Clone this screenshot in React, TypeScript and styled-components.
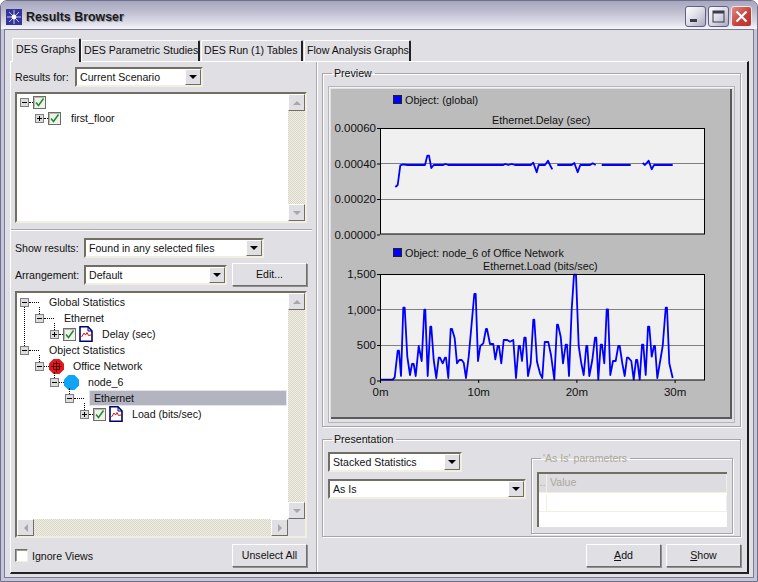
import React from 'react';
import styled, { createGlobalStyle } from 'styled-components';

const GlobalStyle = createGlobalStyle`
	html, body {
		margin: 0;
		padding: 0;
		background: #fff;
	}
	* {
		box-sizing: border-box;
	}
`;

const FONT = `'Liberation Sans', Arial, sans-serif`;

const Window = styled.div`
	width: 758px;
	height: 582px;
	display: flex;
	flex-direction: column;
	padding: 0 3px 3px;
	background: #c6c6d8;
	border: 1px solid #6e6e8c;
	border-radius: 7px 7px 0 0;
	font-family: ${FONT};
	font-size: 10.6px;
	color: #111;
	overflow: hidden;
`;

const TitleBar = styled.div`
	height: 28px;
	margin: 0 -3px;
	padding: 3px 5px 0 5px;
	display: flex;
	align-items: center;
	gap: 2px;
	background: linear-gradient(#a6a6be 0%, #b8b8cc 30%, #dadae6 75%, #f6f6fa 100%);
`;

const TitleText = styled.div`
	flex: 1;
	font-size: 12.4px;
	font-weight: bold;
	color: #1a1a1a;
	text-shadow: 1px 1px 0 #9a9aa8;
	margin-left: 2px;
`;

const CaptionButton = styled.div<{ $close?: boolean }>`
	width: 21px;
	height: 21px;
	flex: none;
	border-radius: 3px;
	display: flex;
	align-items: center;
	justify-content: center;
	border: 1px solid ${p => (p.$close ? '#f0e8e8' : '#5f5f82')};
	background: ${p =>
		p.$close
			? 'linear-gradient(135deg, #e08a80, #c43e3a 60%, #b8322f)'
			: 'linear-gradient(135deg, #fff, #dcdce6 50%, #a9a9c0)'};
`;

const Client = styled.div`
	flex: 1;
	min-height: 0;
	display: flex;
	flex-direction: column;
	padding: 8px 4px 3px 5px;
	background: #e0dfe3;
	border: 1px solid #7a7a98;
`;

const TabStrip = styled.div`
	height: 23px;
	display: flex;
	align-items: flex-end;
	padding-left: 2px;
	position: relative;
	z-index: 1;
`;

const Tab = styled.div<{ $active?: boolean; $w: number }>`
	width: ${p => p.$w}px;
	height: ${p => (p.$active ? 24 : 21)}px;
	margin-bottom: ${p => (p.$active ? -1 : 0)}px;
	margin-right: ${p => (p.$active ? 0 : 1)}px;
	padding: ${p => (p.$active ? '4px 0 0 3px' : '3px 0 0 2px')};
	background: #e0dfe3;
	border-top: 1px solid #fff;
	border-left: 1px solid #fff;
	border-right: 2px solid #222;
	border-radius: 2px 2px 0 0;
	white-space: nowrap;
	overflow: hidden;
`;

const Page = styled.div`
	flex: 1;
	min-height: 0;
	display: flex;
	border-top: 1px solid #fff;
	border-left: 1px solid #fff;
	border-right: 2px solid #1a1a1a;
	border-bottom: 2px solid #222;
`;

const LeftPanel = styled.div`
	width: 301px;
	flex: none;
	padding: 5px 5px 0 4px;
	display: flex;
	flex-direction: column;
`;

const PanelRule = styled.div`
	height: 2px;
	margin: 6px -5px 7px -4px;
	background: #a9a8ad;
	border-bottom: 1px solid #fff;
`;

const Row = styled.div<{ $mt?: number }>`
	display: flex;
	align-items: center;
	margin-top: ${p => p.$mt ?? 0}px;
`;

const FieldLabel = styled.div<{ $w: number }>`
	width: ${p => p.$w}px;
	flex: none;
`;

const Combo = styled.div<{ $w: number }>`
	width: ${p => p.$w}px;
	height: 20px;
	flex: none;
	display: flex;
	align-items: center;
	justify-content: space-between;
	padding-left: 3px;
	background: #fff;
	border: 2px solid;
	border-color: #716f64 #f1efe2 #f1efe2 #716f64;
`;

const ComboArrow = styled.div`
	width: 16px;
	height: 16px;
	display: flex;
	align-items: center;
	justify-content: center;
	background: #e0dfe3;
	border: 1px solid;
	border-color: #fff #716f64 #716f64 #fff;
	&::after {
		content: '';
		border: 4px solid transparent;
		border-top: 4px solid #000;
		border-bottom: 0;
	}
`;

const PushButton = styled.button<{ $ml?: number }>`
	width: 75px;
	height: 23px;
	flex: none;
	margin-left: ${p => p.$ml ?? 0}px;
	padding: 0 0 2px;
	font: inherit;
	color: inherit;
	background: #e0dfe3;
	border: 1px solid;
	border-color: #fff #716f64 #716f64 #fff;
	box-shadow: 1px 1px 0 #8f8e92;
`;

const Underlined = styled.span`
	text-decoration: underline;
`;

const TreeBox = styled.div<{ $h: number; $horizontal?: boolean }>`
	height: ${p => p.$h}px;
	margin-top: 5px;
	display: grid;
	grid-template-columns: 1fr 17px;
	grid-template-rows: ${p => (p.$horizontal ? '1fr 17px' : '1fr')};
	background: #fff;
	border: 2px solid;
	border-color: #716f64 #f1efe2 #f1efe2 #716f64;
`;

const TreeList = styled.div<{ $pt?: number }>`
	padding-top: ${p => p.$pt ?? 0}px;
	min-width: 0;
`;

const TreeRow = styled.div<{ $depth: number }>`
	height: 16px;
	display: flex;
	align-items: center;
	padding-left: ${p => 3 + p.$depth * 15}px;
`;

const Expander = styled.div<{ $up?: number; $stub?: number }>`
	position: relative;
	width: 9px;
	height: 9px;
	flex: none;
	&::before {
		content: '';
		display: ${p => (p.$up ? 'block' : 'none')};
		position: absolute;
		left: 4px;
		bottom: 100%;
		height: ${p => p.$up}px;
		border-left: 1px dotted #000;
	}
	&::after {
		content: '';
		display: ${p => (p.$stub ? 'block' : 'none')};
		position: absolute;
		left: 100%;
		top: 4px;
		width: ${p => p.$stub}px;
		border-top: 1px dotted #000;
	}
`;

const TreeLabel = styled.div<{ $ml: number }>`
	margin-left: ${p => p.$ml}px;
	white-space: nowrap;
`;

const SelectedLabel = styled.div`
	flex: 1;
	height: 16px;
	margin-left: 15px;
	margin-right: 1px;
	padding-left: 4px;
	line-height: 14px;
	background: #b2b4bf;
	border: 1px solid #e4e4ea;
`;

const IconSlot = styled.div<{ $ml: number }>`
	margin-left: ${p => p.$ml}px;
	display: flex;
	flex: none;
`;

const VScroll = styled.div`
	display: flex;
	flex-direction: column;
	justify-content: space-between;
	background: repeating-conic-gradient(#f1efe2 0 25%, #d8d6cb 0 50%) 0 0 / 2px 2px;
`;

const HScroll = styled.div`
	display: flex;
	justify-content: space-between;
	background: repeating-conic-gradient(#f1efe2 0 25%, #d8d6cb 0 50%) 0 0 / 2px 2px;
`;

const ScrollCorner = styled.div`
	background: #e0dfe3;
`;

const ScrollButton = styled.div<{ $dir: 'up' | 'down' | 'left' | 'right' }>`
	width: 17px;
	height: 17px;
	flex: none;
	display: flex;
	align-items: center;
	justify-content: center;
	background: #e0dfe3;
	border: 1px solid;
	border-color: #fff #716f64 #716f64 #fff;
	&::after {
		content: '';
		border: 4px solid transparent;
		${p => p.$dir === 'up' && 'border-bottom: 4px solid #a7a6aa; border-top: 0;'}
		${p => p.$dir === 'down' && 'border-top: 4px solid #a7a6aa; border-bottom: 0;'}
		${p => p.$dir === 'left' && 'border-right: 4px solid #a7a6aa; border-left: 0;'}
		${p => p.$dir === 'right' && 'border-left: 4px solid #a7a6aa; border-right: 0;'}
	}
`;

const BottomRow = styled.div`
	margin-top: 6px;
	display: flex;
	align-items: center;
	justify-content: space-between;
`;

const CheckRow = styled.label`
	display: flex;
	align-items: center;
	gap: 4px;
`;

const CheckBox = styled.span`
	width: 13px;
	height: 13px;
	background: #fff;
	border: 1px solid;
	border-color: #716f64 #f1efe2 #f1efe2 #716f64;
	box-shadow: inset 1px 1px 0 #a09f98;
`;

const RightPanel = styled.div`
	flex: 1;
	min-width: 0;
	padding: 4px 6px 0 5px;
	display: flex;
	flex-direction: column;
	border-left: 1px solid #a9a8ad;
	margin-left: 4px;
	box-shadow: inset 1px 0 0 #fff;
`;

const GroupBox = styled.fieldset<{ $h: number; $mt?: number; $disabled?: boolean }>`
	height: ${p => p.$h}px;
	margin: ${p => p.$mt ?? 0}px 0 0;
	padding: 0 5px;
	min-width: 0;
	border: 1px solid #a5a4a9;
	box-shadow: inset 1px 1px 0 #fff, 1px 1px 0 #fff;
	color: ${p => (p.$disabled ? '#aca899' : 'inherit')};
`;

const GroupTitle = styled.legend`
	margin-left: 4px;
	padding: 0 3px 0 2px;
	line-height: 14px;
`;

const PreviewFrame = styled.div`
	height: 337px;
	margin-top: 6px;
	padding: 2px 2px 3px 2px;
	border: 1px solid #b6b5ba;
	box-shadow: inset 1px 1px 0 #f2f2f4;
`;

const PreviewPlot = styled.div`
	height: 100%;
	background: #bcbcbc;
	border-right: 2px solid #5a5a5a;
	border-bottom: 2px solid #5a5a5a;
`;

const ChartSvg = styled.svg`
	display: block;
	text {
		font-family: ${FONT};
		font-size: 10.8px;
		fill: #111;
	}
	text.axis {
		font-size: 11.5px;
	}
`;

const PresentationBody = styled.div`
	display: flex;
	margin-top: 6px;
`;

const PresentationLeft = styled.div`
	width: 198px;
	flex: none;
	display: flex;
	flex-direction: column;
	gap: 7px;
`;

const ParamsColumn = styled.div`
	flex: 1;
	margin: -1px 2px 0 5px;
`;

const ParamGrid = styled.div`
	height: 55px;
	margin-top: 7px;
	background: #fff;
	border-top: 2px solid #716f64;
	border-left: 2px solid #716f64;
`;

const GridRow = styled.div<{ $header?: boolean }>`
	height: ${p => (p.$header ? 19 : 17)}px;
	margin-top: ${p => (p.$header ? 0 : 2)}px;
	display: flex;
	line-height: 16px;
	background: ${p => (p.$header ? '#dddce0' : '#fff')};
	border-bottom: 1px solid #f1efe2;
	border-right: 1px solid #f1efe2;
`;

const GridGutter = styled.div`
	width: 8px;
	text-align: center;
	border-right: 1px solid #f1efe2;
`;

const GridCell = styled.div`
	flex: 1;
	padding-left: 3px;
`;

const ActionRow = styled.div`
	margin-top: 7px;
	display: flex;
	justify-content: flex-end;
	gap: 5px;
`;

const delayPoints = [
	[[226, 381], [233, 375], [241, 316], [250, 313], [262, 315], [315, 315], [322, 287], [327, 287], [334, 324], [341, 315], [370, 315], [376, 312], [385, 315], [550, 315], [556, 312], [565, 315], [575, 312], [585, 315], [632, 315], [640, 308], [650, 337], [656, 315], [675, 315], [684, 302], [690, 315], [697, 328]],
	[[712, 315], [755, 315], [763, 309], [773, 337], [781, 315], [810, 315], [818, 310], [827, 315]],
	[[845, 315], [932, 315]],
	[[968, 309], [975, 315], [986, 302], [995, 328], [1002, 315], [1058, 315]],
];

const loadPoints = [
	[[181, 419], [218, 419], [224, 412], [233, 332], [237, 332], [243, 408], [250, 203], [254, 203], [262, 350], [270, 405], [276, 372], [281, 372], [287, 408], [296, 318], [305, 363], [313, 209], [316, 209], [323, 408], [331, 260], [334, 260], [341, 360], [349, 414], [356, 353], [360, 353], [368, 370], [375, 353], [378, 353], [385, 414], [392, 267], [396, 267], [404, 295], [411, 370], [418, 360], [425, 360], [431, 368], [438, 414], [446, 350], [463, 162], [467, 162], [474, 363], [481, 318], [490, 310], [498, 267], [501, 267], [510, 312], [520, 312], [526, 358], [533, 318], [537, 318], [544, 370], [551, 300], [562, 300], [570, 305], [580, 300], [588, 414], [596, 318], [600, 318], [606, 363], [613, 293], [617, 293], [624, 408], [632, 370], [640, 239], [643, 239], [651, 365], [660, 400], [667, 414], [674, 306], [685, 306], [693, 345], [703, 419], [711, 254], [714, 254], [722, 290], [729, 370], [737, 314], [741, 314], [747, 408], [755, 208], [762, 104], [768, 104], [776, 318], [784, 370], [791, 405], [799, 318], [802, 318], [808, 408], [817, 360], [825, 293], [829, 293], [835, 419], [842, 314], [846, 314], [853, 370], [860, 208], [864, 208], [871, 405], [879, 363], [887, 363], [895, 318], [899, 318], [907, 370], [914, 408], [921, 353], [925, 353], [934, 363], [941, 419], [948, 360], [952, 360], [959, 419], [966, 314], [970, 314], [977, 405], [984, 260], [988, 260], [995, 350], [1002, 318], [1005, 318], [1012, 414], [1028, 318], [1037, 203], [1041, 203], [1048, 370], [1058, 414]],
];

// points were read off the picture at 3x, so bring them back down to chart pixels
const toLine = (pts: number[][], yOffset: number) =>
	pts.map(([x, y]) => `${(x / 3 - 11).toFixed(1)},${(y / 3 + yOffset).toFixed(1)}`).join(' ');

interface ChartProps {
	height: number;
	legend: string;
	legendY: number;
	title: string;
	titleX: number;
	plotTop: number;
	yLabels: string[];
	lines: number[][][];
	yOffset: number;
	xLabels?: boolean;
}

const Chart = ({ height, legend, legendY, title, titleX, plotTop, yLabels, lines, yOffset, xLabels }: ChartProps) => (
	<ChartSvg width={400} height={height} viewBox={`0 0 400 ${height}`}>
		<rect x={62.5} y={legendY - 4.5} width={8} height={8} fill="#0000ff" stroke="#222" />
		<text x={74} y={legendY + 4}>{legend}</text>
		<text x={titleX} y={plotTop - 4}>{title}</text>
		<rect x={49.5} y={plotTop + 0.5} width={324} height={105.5} fill="#f0f0f0" />
		{[35.5, 71.5].map(d => (
			<line key={d} x1={50} x2={373} y1={plotTop + d} y2={plotTop + d} stroke="#808080" />
		))}
		{yLabels.map((label, i) => (
			<g key={label}>
				<text className="axis" x={45} y={plotTop + 4 + i * 35.5} textAnchor="end">{label}</text>
				<line x1={46} x2={49} y1={plotTop + 0.5 + i * 35.5} y2={plotTop + 0.5 + i * 35.5} stroke="#000" />
			</g>
		))}
		{lines.map((pts, i) => (
			<polyline key={i} points={toLine(pts, yOffset)} fill="none" stroke="#0000ff" strokeWidth={1.8} strokeLinejoin="round" />
		))}
		<rect x={49.5} y={plotTop + 0.5} width={324} height={105.5} fill="none" stroke="#000" />
		{xLabels &&
			['0m', '10m', '20m', '30m'].map((label, i) => (
				<g key={label}>
					<line x1={49.5 + i * 98.2} x2={49.5 + i * 98.2} y1={plotTop + 106} y2={plotTop + 109} stroke="#000" />
					<text className="axis" x={49.5 + i * 98.2} y={plotTop + 122} textAnchor="middle">{label}</text>
				</g>
			))}
	</ChartSvg>
);

const ExpanderBox = ({ open }: { open?: boolean }) => (
	<svg width="9" height="9" viewBox="0 0 9 9" style={{ display: 'block' }}>
		<rect x="0.5" y="0.5" width="8" height="8" fill="#dcdcdc" stroke="#808080" />
		<line x1="2" x2="7" y1="4.5" y2="4.5" stroke="#000" />
		{!open && <line x1="4.5" x2="4.5" y1="2" y2="7" stroke="#000" />}
	</svg>
);

const CheckIcon = () => (
	<svg width="13" height="13" viewBox="0 0 13 13" style={{ display: 'block' }}>
		<rect x="0.5" y="0.5" width="12" height="12" fill="#f0f0ec" stroke="#6d6d66" />
		<path d="M1.5 1.5h10M1.5 1.5v10" stroke="#b9b9b4" fill="none" />
		<path d="M3 6.5l2.5 3L10.5 2.5" stroke="#1f8a2d" strokeWidth="1.5" fill="none" />
	</svg>
);

const DocIcon = () => (
	<svg width="14" height="16" viewBox="0 0 14 16" style={{ display: 'block' }}>
		<path d="M1 0.8H9L13 5V15.2H1Z" fill="#fff" stroke="#00006e" strokeWidth="1.6" />
		<path d="M9 1V5H13" fill="none" stroke="#00006e" />
		<path d="M2.5 11L5 7L6.5 9L8 6.5L9.5 9.5L12 9" fill="none" stroke="#e01010" />
	</svg>
);

const NetworkIcon = () => (
	<svg width="15" height="15" viewBox="0 0 15 15" style={{ display: 'block' }}>
		<path d="M4.5 0H10.5L15 4.5V10.5L10.5 15H4.5L0 10.5V4.5Z" fill="#e01a1a" />
		<path d="M7.5 2V13M2 7.5H13M4.5 4.5H10.5V10.5H4.5Z" fill="none" stroke="#5a0505" />
	</svg>
);

const NodeIcon = () => (
	<svg width="15" height="15" viewBox="0 0 15 15" style={{ display: 'block' }}>
		<path d="M4.5 0H10.5L15 4.5V10.5L10.5 15H4.5L0 10.5V4.5Z" fill="#10a4f4" />
	</svg>
);

const AppIcon = () => (
	<svg width="16" height="16" viewBox="0 0 16 16" style={{ display: 'block', flex: 'none' }}>
		<rect width="16" height="16" fill="#34349c" />
		<path d="M8 1V15M1 8H15M3 3L13 13M13 3L3 13" stroke="#c8c8f4" strokeWidth="1" />
		<circle cx="8" cy="8" r="2.4" fill="#fff" />
	</svg>
);

export default function App() {
	return (
		<>
			<GlobalStyle />
			<Window>
				<TitleBar>
					<AppIcon />
					<TitleText>Results Browser</TitleText>
					<CaptionButton>
						<svg width="13" height="13" viewBox="0 0 13 13">
							<rect x="1" y="9" width="7" height="3" fill="#3a3a50" />
						</svg>
					</CaptionButton>
					<CaptionButton>
						<svg width="13" height="13" viewBox="0 0 13 13">
							<rect x="1" y="1" width="11" height="11" fill="none" stroke="#3a3a50" />
							<rect x="1" y="1" width="11" height="2.5" fill="#3a3a50" />
						</svg>
					</CaptionButton>
					<CaptionButton $close>
						<svg width="13" height="13" viewBox="0 0 13 13">
							<path d="M1.5 1.5L11.5 11.5M11.5 1.5L1.5 11.5" stroke="#fff" strokeWidth="2.2" />
						</svg>
					</CaptionButton>
				</TitleBar>
				<Client>
					<TabStrip>
						<Tab $active $w={69}>DES Graphs</Tab>
						<Tab $w={119}>DES Parametric Studies</Tab>
						<Tab $w={102}>DES Run (1) Tables</Tab>
						<Tab $w={107}>Flow Analysis Graphs</Tab>
					</TabStrip>
					<Page>
						<LeftPanel>
							<Row>
								<FieldLabel $w={60}>Results for:</FieldLabel>
								<Combo $w={128}>
									Current Scenario
									<ComboArrow />
								</Combo>
							</Row>
							<TreeBox $h={131}>
								<TreeList>
									<TreeRow $depth={0}>
										<Expander $stub={4}><ExpanderBox open /></Expander>
										<IconSlot $ml={4}><CheckIcon /></IconSlot>
									</TreeRow>
									<TreeRow $depth={1}>
										<Expander $stub={4}><ExpanderBox /></Expander>
										<IconSlot $ml={4}><CheckIcon /></IconSlot>
										<TreeLabel $ml={10}>first_floor</TreeLabel>
									</TreeRow>
								</TreeList>
								<VScroll>
									<ScrollButton $dir="up" />
									<ScrollButton $dir="down" />
								</VScroll>
							</TreeBox>
							<PanelRule />
							<Row>
								<FieldLabel $w={69}>Show results:</FieldLabel>
								<Combo $w={180}>
									Found in any selected files
									<ComboArrow />
								</Combo>
							</Row>
							<Row $mt={5}>
								<FieldLabel $w={69}>Arrangement:</FieldLabel>
								<Combo $w={143}>
									Default
									<ComboArrow />
								</Combo>
								<PushButton $ml={5}>Edit...</PushButton>
							</Row>
							<TreeBox $h={247} $horizontal>
								<TreeList $pt={1}>
									<TreeRow $depth={0}>
										<Expander $stub={10}><ExpanderBox open /></Expander>
										<TreeLabel $ml={20}>Global Statistics</TreeLabel>
									</TreeRow>
									<TreeRow $depth={1}>
										<Expander $up={7} $stub={10}><ExpanderBox open /></Expander>
										<TreeLabel $ml={20}>Ethernet</TreeLabel>
									</TreeRow>
									<TreeRow $depth={2}>
										<Expander $up={7} $stub={4}><ExpanderBox /></Expander>
										<IconSlot $ml={4}><CheckIcon /></IconSlot>
										<IconSlot $ml={3}><DocIcon /></IconSlot>
										<TreeLabel $ml={9}>Delay (sec)</TreeLabel>
									</TreeRow>
									<TreeRow $depth={0}>
										<Expander $up={39} $stub={10}><ExpanderBox open /></Expander>
										<TreeLabel $ml={20}>Object Statistics</TreeLabel>
									</TreeRow>
									<TreeRow $depth={1}>
										<Expander $up={7} $stub={5}><ExpanderBox open /></Expander>
										<IconSlot $ml={5}><NetworkIcon /></IconSlot>
										<TreeLabel $ml={9}>Office Network</TreeLabel>
									</TreeRow>
									<TreeRow $depth={2}>
										<Expander $up={6} $stub={5}><ExpanderBox open /></Expander>
										<IconSlot $ml={5}><NodeIcon /></IconSlot>
										<TreeLabel $ml={9}>node_6</TreeLabel>
									</TreeRow>
									<TreeRow $depth={3}>
										<Expander $up={6} $stub={10}><ExpanderBox open /></Expander>
										<SelectedLabel>Ethernet</SelectedLabel>
									</TreeRow>
									<TreeRow $depth={4}>
										<Expander $up={7} $stub={4}><ExpanderBox /></Expander>
										<IconSlot $ml={4}><CheckIcon /></IconSlot>
										<IconSlot $ml={3}><DocIcon /></IconSlot>
										<TreeLabel $ml={9}>Load (bits/sec)</TreeLabel>
									</TreeRow>
								</TreeList>
								<VScroll>
									<ScrollButton $dir="up" />
									<ScrollButton $dir="down" />
								</VScroll>
								<HScroll>
									<ScrollButton $dir="left" />
									<ScrollButton $dir="right" />
								</HScroll>
								<ScrollCorner />
							</TreeBox>
							<BottomRow>
								<CheckRow>
									<CheckBox />
									Ignore Views
								</CheckRow>
								<PushButton>Unselect All</PushButton>
							</BottomRow>
						</LeftPanel>
						<RightPanel>
							<GroupBox $h={361}>
								<GroupTitle>Preview</GroupTitle>
								<PreviewFrame>
									<PreviewPlot>
										<Chart
											height={155}
											legend="Object: (global)"
											legendY={11}
											title="Ethernet.Delay (sec)"
											titleX={161}
											plotTop={39}
											yLabels={['0.00060', '0.00040', '0.00020', '0.00000']}
											lines={delayPoints}
											yOffset={-29}
										/>
										<Chart
											height={174}
											legend="Object: node_6 of Office Network"
											legendY={9}
											title="Ethernet.Load (bits/sec)"
											titleX={152}
											plotTop={30}
											yLabels={['1,500', '1,000', '500', '0']}
											lines={loadPoints}
											yOffset={-4}
											xLabels
										/>
									</PreviewPlot>
								</PreviewFrame>
							</GroupBox>
							<GroupBox $h={105} $mt={5}>
								<GroupTitle>Presentation</GroupTitle>
								<PresentationBody>
									<PresentationLeft>
										<Combo $w={134}>
											Stacked Statistics
											<ComboArrow />
										</Combo>
										<Combo $w={198}>
											As Is
											<ComboArrow />
										</Combo>
									</PresentationLeft>
									<ParamsColumn>
										<GroupBox $h={83} $disabled>
											<GroupTitle>'As Is' parameters</GroupTitle>
											<ParamGrid>
												<GridRow $header>
													<GridGutter>..</GridGutter>
													<GridCell>Value</GridCell>
												</GridRow>
												<GridRow>
													<GridGutter />
													<GridCell />
												</GridRow>
											</ParamGrid>
										</GroupBox>
									</ParamsColumn>
								</PresentationBody>
							</GroupBox>
							<ActionRow>
								<PushButton><Underlined>A</Underlined>dd</PushButton>
								<PushButton><Underlined>S</Underlined>how</PushButton>
							</ActionRow>
						</RightPanel>
					</Page>
				</Client>
			</Window>
		</>
	);
}
